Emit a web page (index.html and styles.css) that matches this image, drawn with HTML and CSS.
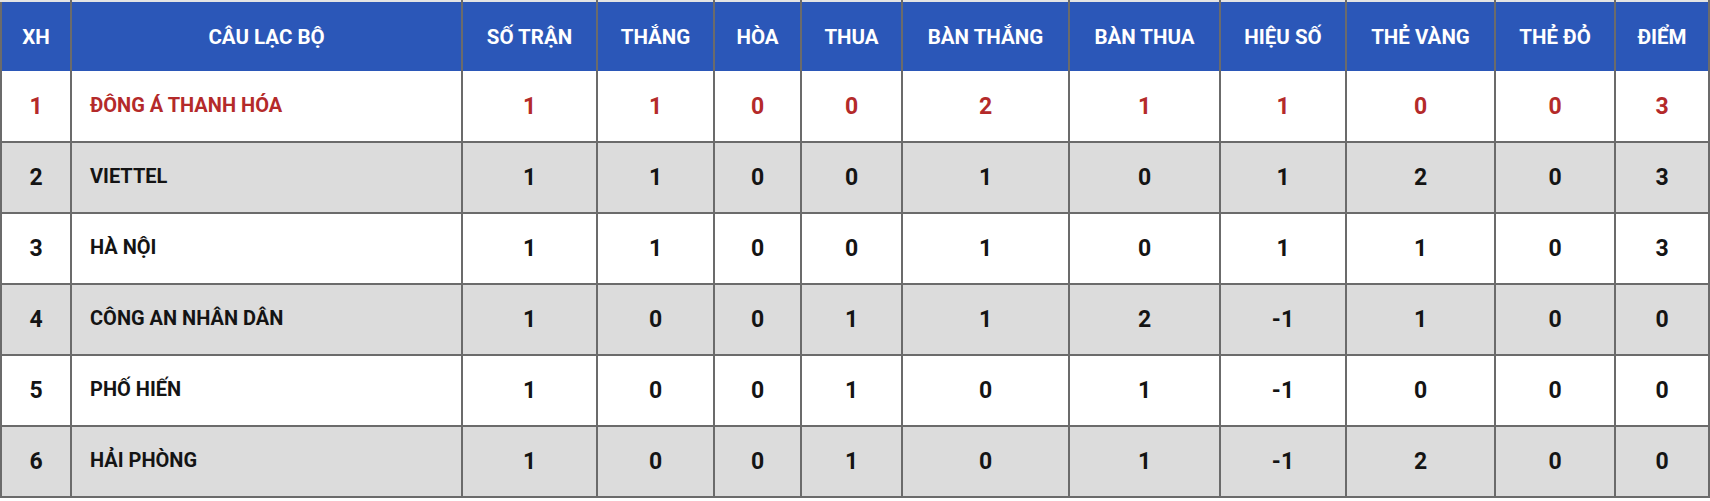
FILE: index.html
```html
<!DOCTYPE html>
<html lang="vi">
<head>
<meta charset="utf-8">
<title>Bảng xếp hạng</title>
<link rel="stylesheet" href="styles.css">
</head>
<body>
<table class="standings">
  <colgroup>
    <col class="c-rank"><col class="c-club"><col class="c-played"><col class="c-win"><col class="c-draw"><col class="c-loss"><col class="c-gf"><col class="c-ga"><col class="c-gd"><col class="c-yc"><col class="c-rc"><col class="c-pts">
  </colgroup>
  <thead>
    <tr>
      <th>XH</th><th>CÂU LẠC BỘ</th><th>SỐ TRẬN</th><th>THẮNG</th><th>HÒA</th><th>THUA</th><th>BÀN THẮNG</th><th>BÀN THUA</th><th>HIỆU SỐ</th><th>THẺ VÀNG</th><th>THẺ ĐỎ</th><th>ĐIỂM</th>
    </tr>
  </thead>
  <tbody>
    <tr class="top">
      <td class="num">1</td><td class="club">ĐÔNG Á THANH HÓA</td><td class="num">1</td><td class="num">1</td><td class="num">0</td><td class="num">0</td><td class="num">2</td><td class="num">1</td><td class="num">1</td><td class="num">0</td><td class="num">0</td><td class="num">3</td>
    </tr>
    <tr class="alt">
      <td class="num">2</td><td class="club">VIETTEL</td><td class="num">1</td><td class="num">1</td><td class="num">0</td><td class="num">0</td><td class="num">1</td><td class="num">0</td><td class="num">1</td><td class="num">2</td><td class="num">0</td><td class="num">3</td>
    </tr>
    <tr>
      <td class="num">3</td><td class="club">HÀ NỘI</td><td class="num">1</td><td class="num">1</td><td class="num">0</td><td class="num">0</td><td class="num">1</td><td class="num">0</td><td class="num">1</td><td class="num">1</td><td class="num">0</td><td class="num">3</td>
    </tr>
    <tr class="alt">
      <td class="num">4</td><td class="club">CÔNG AN NHÂN DÂN</td><td class="num">1</td><td class="num">0</td><td class="num">0</td><td class="num">1</td><td class="num">1</td><td class="num">2</td><td class="num">-1</td><td class="num">1</td><td class="num">0</td><td class="num">0</td>
    </tr>
    <tr>
      <td class="num">5</td><td class="club">PHỐ HIẾN</td><td class="num">1</td><td class="num">0</td><td class="num">0</td><td class="num">1</td><td class="num">0</td><td class="num">1</td><td class="num">-1</td><td class="num">0</td><td class="num">0</td><td class="num">0</td>
    </tr>
    <tr class="alt">
      <td class="num">6</td><td class="club">HẢI PHÒNG</td><td class="num">1</td><td class="num">0</td><td class="num">0</td><td class="num">1</td><td class="num">0</td><td class="num">1</td><td class="num">-1</td><td class="num">2</td><td class="num">0</td><td class="num">0</td>
    </tr>
  </tbody>
</table>
</body>
</html>
```

FILE: styles.css
```css
html, body {
  margin: 0;
  padding: 0;
  background: #ffffff;
}

.standings {
  width: 1710px;
  table-layout: fixed;
  border-collapse: collapse;
  font-family: Roboto, "Noto Sans", "Liberation Sans", sans-serif;
  font-weight: 700;
  color: #141414;
}

.c-rank { width: 70px; }
.c-club { width: 391px; }
.c-played { width: 135px; }
.c-win { width: 117px; }
.c-draw { width: 87px; }
.c-loss { width: 101px; }
.c-gf { width: 167px; }
.c-ga { width: 151px; }
.c-gd { width: 126px; }
.c-yc { width: 149px; }
.c-rc { width: 120px; }
.c-pts { width: 94px; }

.standings th {
  background: #2b57b8;
  color: #ffffff;
  font-size: 20.5px;
  font-weight: 700;
  height: 69px;
  padding: 0;
  text-align: center;
  vertical-align: middle;
  border-left: 2px solid #6b6b6b;
  border-right: 2px solid #6b6b6b;
  border-top: 2px solid #e4e4e4;
  border-bottom-style: hidden;
}

.standings td {
  height: 69px;
  padding: 0;
  border: 2px solid #6b6b6b;
  vertical-align: middle;
  background: #ffffff;
}

.standings tbody tr:first-child td {
  border-top-style: hidden;
  height: 70px;
}

.standings tr.alt td {
  background: #dcdcdc;
}

.standings td.num {
  text-align: center;
  font-size: 23px;
}

.standings td.club {
  text-align: left;
  padding-left: 18px;
  padding-bottom: 3px;
  height: 66px;
  font-size: 20px;
}

.standings tbody tr:first-child td.club {
  height: 67px;
}

.standings tr.top td {
  color: #b42a2a;
}
```
